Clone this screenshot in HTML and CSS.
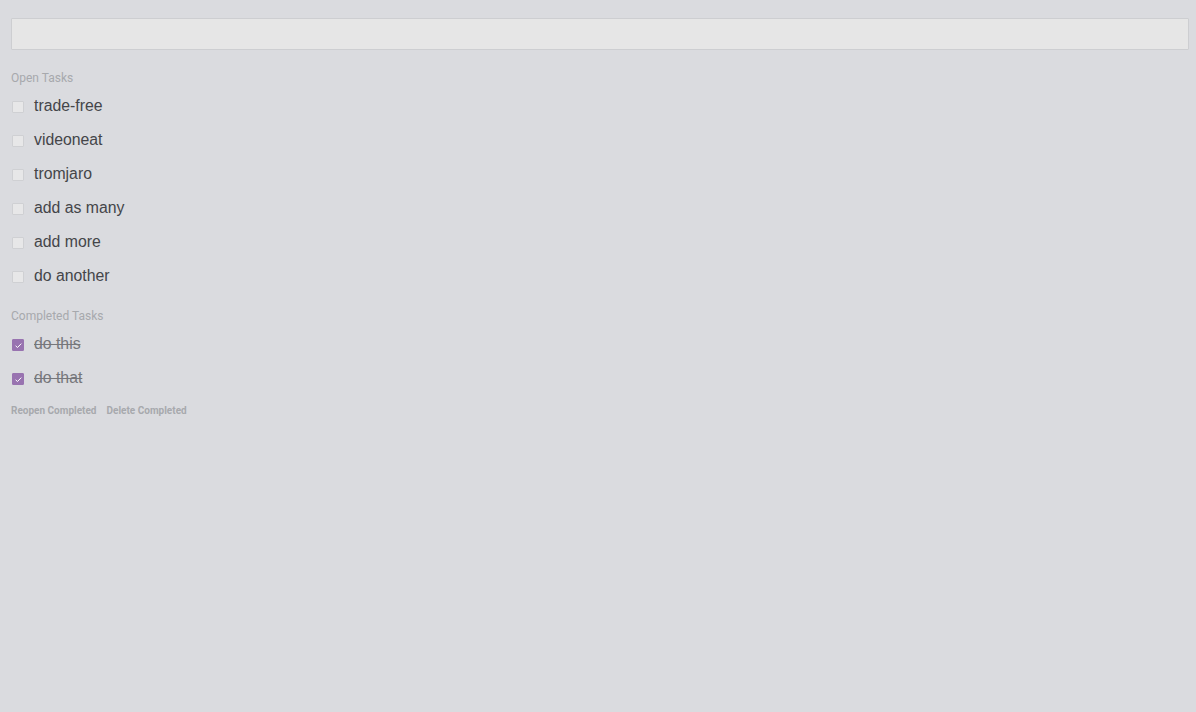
FILE: index.html
```html
<!DOCTYPE html>
<html lang="en">
<head>
    <meta charset="UTF-8">
    <meta name="viewport" content="width=device-width, initial-scale=1.0">
    <title>Tasks</title>
    <link rel="stylesheet" href="styles.css">
</head>
<body>
    <div class="app">
        <!-- New task -->
        <input type="text" class="new-task" aria-label="New task">

        <!-- Open -->
        <div class="section-title">Open Tasks</div>
        <ul class="task-list">
            <li class="task"><span class="box"></span><span class="label">trade-free</span></li>
            <li class="task"><span class="box"></span><span class="label">videoneat</span></li>
            <li class="task"><span class="box"></span><span class="label">tromjaro</span></li>
            <li class="task"><span class="box"></span><span class="label">add as many</span></li>
            <li class="task"><span class="box"></span><span class="label">add more</span></li>
            <li class="task"><span class="box"></span><span class="label">do another</span></li>
        </ul>

        <!-- Completed -->
        <div class="section-title completed-title">Completed Tasks</div>
        <ul class="task-list">
            <li class="task done">
                <span class="box"><svg viewBox="0 0 12 12" width="12" height="12"><path d="M3.6 6.8 L5.5 8.5 L9.3 4.6" fill="none" stroke="#fff" stroke-width="1"/></svg></span>
                <span class="label">do this</span>
            </li>
            <li class="task done">
                <span class="box"><svg viewBox="0 0 12 12" width="12" height="12"><path d="M3.6 6.8 L5.5 8.5 L9.3 4.6" fill="none" stroke="#fff" stroke-width="1"/></svg></span>
                <span class="label">do that</span>
            </li>
        </ul>

        <div class="actions">
            <button>Reopen Completed</button>
            <button>Delete Completed</button>
        </div>
    </div>
</body>
</html>
```

FILE: styles.css
```css
html, body {
    margin: 0;
    background-color: #dadbdf;
}
body {
    font-family: Arial, "Liberation Sans", sans-serif;
}
.app {
    padding: 18px 7px 0 11px;
}
.new-task {
    display: block;
    box-sizing: border-box;
    width: 100%;
    height: 32px;
    margin: 0;
    background: #e6e6e6;
    border: 1px solid #cdced1;
    border-radius: 1px;
    outline: none;
}
.section-title {
    font-family: Roboto, sans-serif;
    font-size: 12px;
    color: #a7a9ad;
    margin-top: 20px;
    height: 16px;
    line-height: 16px;
}
.completed-title {
    margin-top: 15px;
}
.task-list {
    list-style: none;
    margin: 3px 0 0 0;
    padding: 0;
}
.task {
    display: flex;
    align-items: center;
    height: 34px;
    font-size: 15.8px;
    color: #444549;
}
.box {
    width: 12px;
    height: 12px;
    box-sizing: border-box;
    margin: 2px 10px 0 1px;
    background: #e7e7e8;
    border: 1px solid #cfd0d3;
    border-radius: 1px;
    display: flex;
}
.done .box {
    background: #9873b0;
    border-color: #9873b0;
}
.done .box svg {
    margin: -1px;
}
.done .label {
    color: #76777b;
    text-decoration: line-through;
}
.actions {
    display: flex;
    gap: 10px;
    margin-top: 10px;
}
.actions button {
    font-family: Roboto, sans-serif;
    font-size: 10px;
    font-weight: bold;
    color: #a7a9ad;
    background: none;
    border: none;
    padding: 0;
    cursor: pointer;
}
```
